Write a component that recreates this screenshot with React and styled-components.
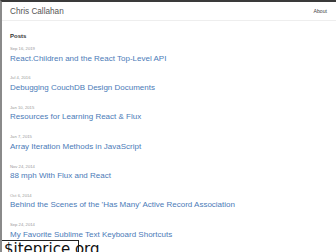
import React from 'react';
import styled, { createGlobalStyle } from 'styled-components';

const GlobalStyle = createGlobalStyle`
  html, body {
    margin: 0;
    padding: 0;
    background: #fff;
  }
  body {
    font-family: "Liberation Sans", Arial, sans-serif;
    width: 336px;
    height: 252px;
    overflow: hidden;
  }
`;

const Frame = styled.div`
  position: relative;
  box-sizing: border-box;
  width: 336px;
  height: 252px;
  overflow: hidden;
  border-top: 2px solid #3a3a3a;
  border-left: 2px solid #8a8a8a;
  background: #fff;
`;

const Header = styled.header`
  display: flex;
  align-items: center;
  justify-content: space-between;
  height: 18px;
  padding: 0 9px 0 8px;
  border-bottom: 1px solid #eeeeee;
`;

const Brand = styled.a`
  font-size: 8.2px;
  color: #555;
  text-decoration: none;
`;

const NavLink = styled.a`
  font-size: 5.2px;
  color: #444;
  text-decoration: none;
`;

const Main = styled.main`
  padding: 12px 8px 0;
`;

const Heading = styled.h2`
  margin: 0 0 7px;
  font-size: 6px;
  font-weight: 700;
  color: #333;
`;

const PostList = styled.ul`
  list-style: none;
  margin: 0;
  padding: 0;
  display: flex;
  flex-direction: column;
  gap: 11.9px;
`;

const Post = styled.li`
  display: flex;
  flex-direction: column;
  gap: 2.5px;
`;

const PostDate = styled.span`
  font-size: 4.2px;
  line-height: 5px;
  color: #9a9a9a;
`;

const PostTitle = styled.a`
  font-size: 8px;
  line-height: 10px;
  color: #4b7bb8;
  text-decoration: none;
`;

const Badge = styled.div`
  position: absolute;
  left: -2px;
  bottom: -8px;
  box-sizing: border-box;
  height: 20px;
  width: 79px;
  padding: 0 0 0 3px;
  display: flex;
  align-items: flex-start;
  background: #fff;
  border: 1px solid #222;
  font-family: "DejaVu Sans", sans-serif;
  font-size: 15px;
  line-height: 17px;
  color: #111;
`;

const posts = [
  { date: 'Sep 16, 2019', title: 'React.Children and the React Top-Level API' },
  { date: 'Jul 4, 2016', title: 'Debugging CouchDB Design Documents' },
  { date: 'Jan 10, 2015', title: 'Resources for Learning React & Flux' },
  { date: 'Jan 7, 2015', title: 'Array Iteration Methods in JavaScript' },
  { date: 'Nov 24, 2014', title: '88 mph With Flux and React' },
  { date: 'Oct 6, 2014', title: "Behind the Scenes of the 'Has Many' Active Record Association" },
  { date: 'Sep 24, 2014', title: 'My Favorite Sublime Text Keyboard Shortcuts' }
];

const App = () => {
  return (
    <>
      <GlobalStyle />
      <Frame>
        <Header>
          <Brand href='#'>Chris Callahan</Brand>
          <NavLink href='#'>About</NavLink>
        </Header>
        <Main>
          <Heading>Posts</Heading>
          <PostList>
            {posts.map((p) => (
              <Post key={p.title}>
                <PostDate>{p.date}</PostDate>
                <PostTitle href='#'>{p.title}</PostTitle>
              </Post>
            ))}
          </PostList>
        </Main>
        <Badge>$iteprice.org</Badge>
      </Frame>
    </>
  );
};

export default App;
